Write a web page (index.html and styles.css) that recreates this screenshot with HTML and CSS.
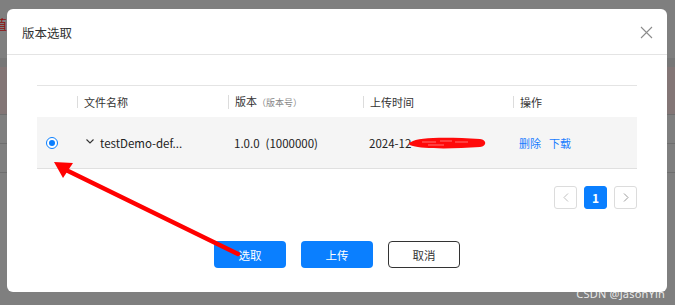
FILE: index.html
```html
<!DOCTYPE html>
<html lang="zh-CN">
<head>
    <meta charset="UTF-8">
    <meta name="viewport" content="width=device-width, initial-scale=1.0">
    <title>版本选取</title>
    <link rel="stylesheet" href="styles.css">
</head>
<body>
    <div class="page">
        <div class="page-top"><span class="page-mark">值</span></div>
        <div class="page-bar"></div>
        <div class="page-row tinted"></div>
        <div class="page-row short"></div>
        <div class="page-row short"></div>
    </div>

    <div class="dialog">
        <div class="dialog-head">
            <span class="dialog-title">版本选取</span>
            <button class="dialog-close" aria-label="关闭">
                <svg width="13" height="13" viewBox="0 0 13 13"><path d="M1 1L12 12M12 1L1 12" stroke="#8c8c8c" stroke-width="1.1" fill="none"/></svg>
            </button>
        </div>
        <div class="dialog-body">
            <div class="grid">
                <div class="grid-head">
                    <div class="cell"></div>
                    <div class="cell sep">文件名称</div>
                    <div class="cell sep">版本<span class="sub">（版本号）</span></div>
                    <div class="cell sep">上传时间</div>
                    <div class="cell sep">操作</div>
                </div>
                <div class="grid-row">
                    <div class="cell radio-cell"><span class="radio"></span></div>
                    <div class="cell name-cell">
                        <svg class="chev" width="8" height="5" viewBox="0 0 8 5"><path d="M0.5 0.5L4 4L7.5 0.5" stroke="#333" stroke-width="1.1" fill="none"/></svg>
                        <span>testDemo-def...</span>
                    </div>
                    <div class="cell version">1.0.0<span class="gap"></span>(1000000)</div>
                    <div class="cell">2024-12<svg class="scribble" width="78" height="14" viewBox="0 0 78 14"><path d="M3 6C10 1 40 1 72 3C79 4 79 10 72 11C45 13 14 13 5 10C0 9 0 7 3 6Z" fill="#ff0a0a"/><path d="M14 6H28M32 5H44M47 6H60M20 9H36" stroke="#ff8a8a" stroke-width="0.8"/></svg></div>
                    <div class="cell ops"><a href="#">删除</a><a href="#">下载</a></div>
                </div>
            </div>

            <div class="pager">
                <span class="pg disabled">
                    <svg width="6" height="9" viewBox="0 0 6 9"><path d="M5 0.5L1 4.5L5 8.5" stroke="#c0c0c0" fill="none"/></svg>
                </span>
                <span class="pg active">1</span>
                <span class="pg">
                    <svg width="6" height="9" viewBox="0 0 6 9"><path d="M1 0.5L5 4.5L1 8.5" stroke="#9a9a9a" fill="none"/></svg>
                </span>
            </div>

            <div class="actions">
                <button class="btn primary">选取</button>
                <button class="btn primary">上传</button>
                <button class="btn plain">取消</button>
            </div>
        </div>
    </div>

    <svg class="arrow" width="675" height="305" viewBox="0 0 675 305">
        <path d="M238 254L64 169" stroke="#ff0000" stroke-width="4.5" stroke-linecap="round"/>
        <path d="M54 162L73 163L63 178Z" fill="#ff0000"/>
    </svg>

    <div class="watermark">CSDN @JasonYin</div>
</body>
</html>
```

FILE: styles.css
```css
* {
    box-sizing: border-box;
}
body {
    margin: 0;
    width: 675px;
    height: 305px;
    overflow: hidden;
    position: relative;
    background-color: #7f7f7f;
    font-family: "Noto Sans CJK SC", "Noto Sans", sans-serif;
    color: #333;
}

/* dimmed page behind the dialog */
.page-top {
    height: 58px;
    padding-top: 10px;
}
.page-mark {
    display: inline-block;
    margin-left: -6px;
    font-size: 13px;
    line-height: 14px;
    color: #8e0f0f;
}
.page-bar {
    height: 9px;
    background-color: #777;
}
.page-row {
    height: 48px;
    border-bottom: 1px solid #6e6e6e;
}
.page-row.tinted {
    background-color: #837676;
}
.page-row.short {
    height: 29px;
}

/* dialog */
.dialog {
    position: absolute;
    left: 7px;
    top: 9px;
    width: 660px;
    height: 283px;
    background-color: #fff;
    border-radius: 6px;
}
.dialog-head {
    height: 46px;
    display: flex;
    align-items: center;
    justify-content: space-between;
    padding: 0 14px 0 15px;
    border-bottom: 1px solid #e4e4e4;
}
.dialog-title {
    font-size: 12.5px;
    color: #333;
    padding-top: 2px;
}
.dialog-close {
    border: none;
    background: none;
    padding: 0;
    width: 13px;
    height: 13px;
    display: flex;
    margin-top: 2px;
}
.dialog-body {
    padding: 30px 30px 0;
}

/* table */
.grid-head,
.grid-row {
    display: grid;
    grid-template-columns: 40px 151px 135px 150px 1fr;
    align-items: center;
}
.grid-head {
    height: 32px;
    border-top: 1px solid #e4e4e4;
    font-size: 11px;
    color: #333;
}
.grid-head .cell {
    padding-left: 6px;
    line-height: 12px;
}
.grid-head .sep {
    border-left: 1px solid #dcdcdc;
}
.sub {
    font-size: 9px;
    color: #888;
}
.grid-row {
    height: 52px;
    background-color: #f5f5f5;
    border-bottom: 1px solid #e0e0e0;
    font-size: 11.5px;
    color: #222;
}
.grid-row .cell {
    padding-left: 6px;
    display: flex;
    align-items: center;
}
.grid-row .radio-cell {
    padding-left: 9px;
}
.radio {
    width: 12px;
    height: 12px;
    border: 1px solid #0a7fff;
    border-radius: 50%;
    position: relative;
    background-color: #fff;
}
.radio::after {
    content: "";
    position: absolute;
    left: 2px;
    top: 2px;
    width: 6px;
    height: 6px;
    border-radius: 50%;
    background-color: #0a7fff;
}
.grid-row .name-cell {
    padding-left: 9px;
}
.chev {
    margin-right: 6px;
    margin-top: -3px;
}
.version .gap {
    width: 6px;
}
.scribble {
    margin-left: -3px;
}
.ops a {
    color: #1a7dff;
    text-decoration: none;
    margin-right: 8px;
    font-size: 11px;
}

/* pagination */
.pager {
    display: flex;
    justify-content: flex-end;
    gap: 7px;
    margin-top: 17px;
}
.pg {
    width: 23px;
    height: 23px;
    border: 1px solid #dcdcdc;
    border-radius: 3px;
    display: flex;
    align-items: center;
    justify-content: center;
    font-size: 12px;
    font-weight: bold;
}
.pg.active {
    background-color: #0a7fff;
    border-color: #0a7fff;
    color: #fff;
}

/* buttons */
.actions {
    display: flex;
    justify-content: center;
    gap: 15px;
    margin-top: 32px;
}
.btn {
    width: 72px;
    height: 27px;
    border-radius: 4px;
    font-family: inherit;
    font-size: 11.5px;
    cursor: pointer;
}
.btn.primary {
    background-color: #0a7fff;
    border: none;
    color: #fff;
}
.btn.plain {
    background-color: #fff;
    border: 1px solid #333;
    color: #333;
}

/* annotations lying over the screenshot */
.arrow {
    position: absolute;
    left: 0;
    top: 0;
    pointer-events: none;
}
.watermark {
    position: absolute;
    right: 10px;
    bottom: 4px;
    font-size: 11px;
    color: rgba(255, 255, 255, 0.85);
    letter-spacing: 0.2px;
    font-family: "Noto Sans", sans-serif;
}
```
